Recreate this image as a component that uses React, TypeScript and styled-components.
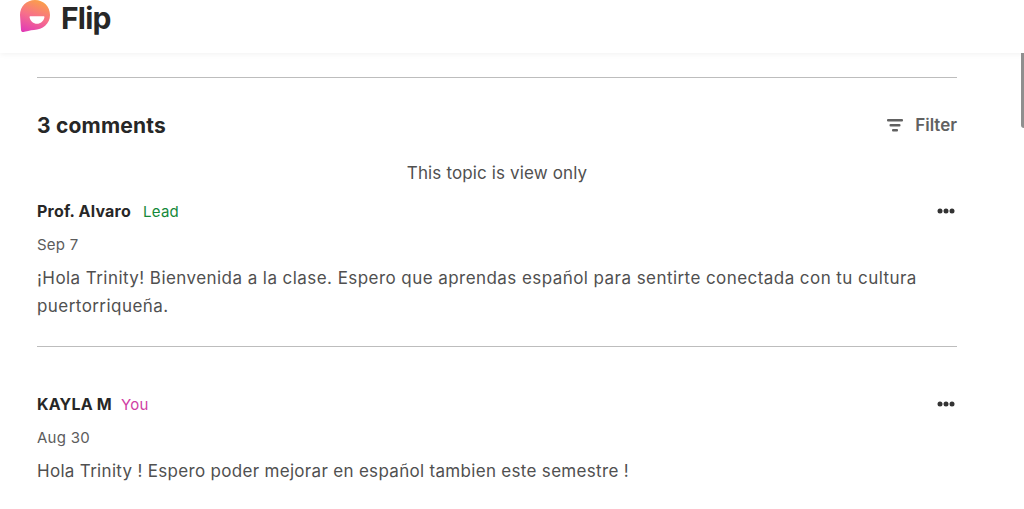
import React from 'react'
import styled, { createGlobalStyle } from 'styled-components'

const GlobalStyle = createGlobalStyle`
  html, body {
    margin: 0;
    padding: 0;
    height: 100%;
    overflow: hidden;
    background: #fff;
    font-family: 'Inter', 'Liberation Sans', sans-serif;
  }
`

const Page = styled.div`
  width: 1024px;
  height: 509px;
  overflow: hidden;
  position: relative;
`

const Header = styled.header`
  height: 53px;
  box-sizing: border-box;
  padding-left: 19px;
  display: flex;
  align-items: flex-start;
  gap: 10px;
  box-shadow: 0 1px 6px rgba(0, 0, 0, 0.06);
`

const BrandName = styled.span`
  font-size: 30px;
  line-height: 36px;
  font-weight: 700;
  letter-spacing: -0.8px;
  color: #272727;
`

const ScrollThumb = styled.div`
  position: absolute;
  top: 53px;
  right: 0;
  width: 3px;
  height: 75px;
  background: #8f8f8f;
  border-bottom-left-radius: 3px;
`

const Content = styled.main`
  width: 920px;
  margin-left: 37px;
  padding-top: 24px;
`

const Rule = styled.hr<{ $top?: number }>`
  margin: ${p => p.$top ?? 0}px 0 0;
  border: 0;
  height: 1px;
  background: #bdbdbd;
`

const TitleRow = styled.div`
  display: flex;
  justify-content: space-between;
  align-items: center;
  margin-top: 32px;
  height: 30px;
`

const Title = styled.h2`
  margin: 0;
  font-size: 21px;
  font-weight: 700;
  letter-spacing: 0.2px;
  color: #272727;
`

const FilterButton = styled.div`
  display: flex;
  align-items: center;
  gap: 12px;
  font-size: 17px;
  font-weight: 600;
  color: #616161;
`

const ViewOnly = styled.div`
  margin-top: 21px;
  text-align: center;
  font-size: 17px;
  letter-spacing: 0.13px;
  line-height: 24px;
  color: #505050;
`

const Comment = styled.article<{ $top: number }>`
  margin-top: ${p => p.$top}px;
`

const AuthorRow = styled.div`
  display: flex;
  align-items: center;
  height: 24px;
`

const Author = styled.span`
  font-size: 16px;
  font-weight: 700;
  letter-spacing: 0.2px;
  color: #272727;
`

const Badge = styled.span<{ $color: string; $gap: number }>`
  margin-left: ${p => p.$gap}px;
  font-size: 15px;
  letter-spacing: 0.3px;
  color: ${p => p.$color};
`

const Dots = styled.svg`
  margin-left: auto;
  margin-right: 2px;
`

const DateLine = styled.div`
  margin-top: 12px;
  font-size: 15px;
  letter-spacing: 0.25px;
  line-height: 20px;
  color: #5c5c5c;
`

const Body = styled.p<{ $tracking: number }>`
  margin: 9px 0 0;
  font-size: 17px;
  line-height: 28px;
  letter-spacing: ${p => p.$tracking}px;
  color: #505050;
`

const MoreIcon = () => (
  <Dots width="18" height="6" viewBox="0 0 18 6" aria-hidden="true">
    <circle cx="3" cy="3" r="2.5" fill="#333" />
    <circle cx="9" cy="3" r="2.5" fill="#333" />
    <circle cx="15" cy="3" r="2.5" fill="#333" />
  </Dots>
)

const comments = [
  {
    author: 'Prof. Alvaro',
    badge: 'Lead',
    badgeGap: 12,
    badgeColor: '#15893a',
    date: 'Sep 7',
    tracking: 0.44,
    text: '¡Hola Trinity! Bienvenida a la clase. Espero que aprendas español para sentirte conectada con tu cultura puertorriqueña.',
  },
  {
    author: 'KAYLA M',
    badge: 'You',
    badgeGap: 9,
    badgeColor: '#cf3ea4',
    date: 'Aug 30',
    tracking: 0.31,
    text: 'Hola Trinity ! Espero poder mejorar en español tambien este semestre !',
  },
]

const App = () => (
  <Page>
    <GlobalStyle />
    <Header>
      <svg width="32" height="33" viewBox="0 0 32 33" aria-hidden="true">
        <defs>
          <linearGradient id="flipLogo" x1="0.6" y1="0" x2="0.25" y2="1">
            <stop offset="0" stopColor="#fb9f4a" />
            <stop offset="0.5" stopColor="#f7708a" />
            <stop offset="1" stopColor="#e23db4" />
          </linearGradient>
        </defs>
        <path
          d="M16 0C24.5 0 31 6.5 31 15C31 24 23.5 29.5 15 30C11 30.3 7 31.5 4.5 32C3 32.2 2.2 31.5 2 30L1 15C1 6.5 7.5 0 16 0Z"
          fill="url(#flipLogo)"
        />
        <path
          d="M11.5 16.3H24.5C25.2 16.3 25.6 16.8 25.4 17.5C24.7 21 21.6 23.8 18 23.8C14.4 23.8 11.3 21 10.6 17.5C10.4 16.8 10.8 16.3 11.5 16.3Z"
          fill="#fff"
        />
      </svg>
      <BrandName>Flip</BrandName>
    </Header>
    <ScrollThumb />
    <Content>
      <Rule />
      <TitleRow>
        <Title>3 comments</Title>
        <FilterButton>
          <svg width="16" height="13" viewBox="0 0 16 13" aria-hidden="true">
            <rect x="0" y="0" width="16" height="2.4" rx="1" fill="#616161" />
            <rect x="2.5" y="5" width="11" height="2.4" rx="1" fill="#616161" />
            <rect x="5" y="10" width="6" height="2.4" rx="1" fill="#616161" />
          </svg>
          Filter
        </FilterButton>
      </TitleRow>
      <ViewOnly>This topic is view only</ViewOnly>
      {comments.map((c, i) => (
        <React.Fragment key={c.author}>
          {i > 0 && <Rule $top={26} />}
          <Comment $top={i === 0 ? 14 : 45}>
            <AuthorRow>
              <Author>{c.author}</Author>
              <Badge $color={c.badgeColor} $gap={c.badgeGap}>{c.badge}</Badge>
              <MoreIcon />
            </AuthorRow>
            <DateLine>{c.date}</DateLine>
            <Body $tracking={c.tracking}>{c.text}</Body>
          </Comment>
        </React.Fragment>
      ))}
    </Content>
  </Page>
)

export default App
